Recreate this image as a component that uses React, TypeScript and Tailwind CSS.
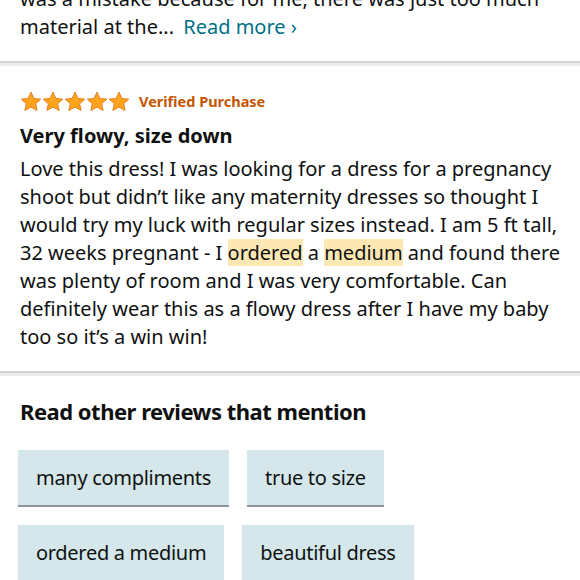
import React from "react";

const Star = () => (
  <svg width="22" height="21" viewBox="0 0 24 23">
    <path
      d="M12 1.2l3.2 6.9 7.5.8-5.6 5.1 1.6 7.4L12 17.6l-6.7 3.8 1.6-7.4L1.3 8.9l7.5-.8z"
      fill="#ffa41c"
      stroke="#e47911"
      strokeWidth="1"
      strokeLinejoin="round"
    />
  </svg>
);

const Sep = () => (
  <div>
    <div className="h-[2px] bg-[#d4d4d4]" />
    <div className="h-[3px] bg-[#ececec]" />
  </div>
);

const Chip = ({ children }: { children: React.ReactNode }) => (
  <div className="h-[57px] px-[18px] flex items-center bg-[#d5e7ea] border-b-2 border-[#8a9599] text-[20px] tracking-[-0.3px] text-[#0f1111]">
    {children}
  </div>
);

export default function App() {
  const font = { fontFamily: '"Noto Sans", "Open Sans", sans-serif' };
  return (
    <div className="w-[580px] h-[580px] overflow-hidden bg-white text-[#0f1111]" style={font}>
      <div className="px-5 pb-[20px] -mt-[15px] text-[20px] leading-[28px] whitespace-nowrap">
        <div>was a mistake because for me, there was just too much</div>
        <div>
          material at the...{" "}
          <span className="ml-[4px] text-[#007185]">Read more ›</span>
        </div>
      </div>
      <Sep />
      <div className="px-5 pt-[24px] pb-[20px] text-[20px] leading-[28px] whitespace-nowrap">
        <div className="flex items-center gap-[9px] h-[22px]">
          <div className="flex">
            <Star />
            <Star />
            <Star />
            <Star />
            <Star />
          </div>
          <span className="text-[14.5px] font-bold text-[#c45500]">Verified Purchase</span>
        </div>
        <div className="mt-[10px] text-[20px] font-bold leading-[28px]">Very flowy, size down</div>
        <div className="mt-[5px]">
          <div>Love this dress! I was looking for a dress for a pregnancy</div>
          <div>shoot but didn’t like any maternity dresses so thought I</div>
          <div>would try my luck with regular sizes instead. I am 5 ft tall,</div>
          <div>
            32 weeks pregnant - I <span className="bg-[#fde8b4]">ordered</span> a{" "}
            <span className="bg-[#fde8b4]">medium</span> and found there
          </div>
          <div>was plenty of room and I was very comfortable. Can</div>
          <div>definitely wear this as a flowy dress after I have my baby</div>
          <div>too so it’s a win win!</div>
        </div>
      </div>
      <Sep />
      <div className="px-[18px] pt-[20px]">
        <div className="px-[2px] text-[22px] tracking-[-0.5px] font-bold leading-[30px]">Read other reviews that mention</div>
        <div className="mt-[24px] flex flex-wrap gap-[18px] w-[480px]">
          <Chip>many compliments</Chip>
          <Chip>true to size</Chip>
          <Chip>ordered a medium</Chip>
          <Chip>beautiful dress</Chip>
        </div>
      </div>
    </div>
  );
}
